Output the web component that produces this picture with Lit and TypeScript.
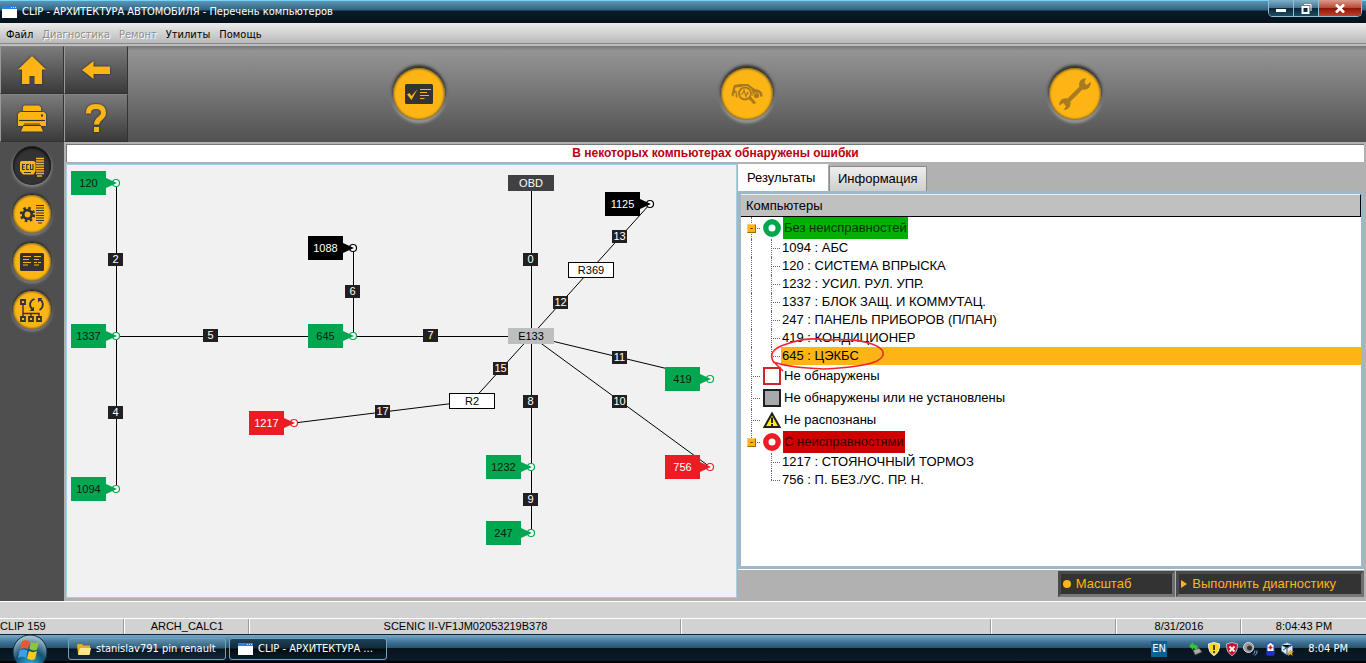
import { LitElement, html, svg, css, nothing } from "lit";
import { customElement, state } from "lit/decorators.js";
import { classMap } from "lit/directives/class-map.js";

type Tone = "ok" | "fault" | "idle";

interface Ecu { id: string; x: number; y: number; tone: Tone }
interface Mark { id: string; x: number; y: number }

const ECUS: Ecu[] = [
  { id: "120", x: 4, y: 6, tone: "ok" },
  { id: "1337", x: 4, y: 159, tone: "ok" },
  { id: "1094", x: 4, y: 312, tone: "ok" },
  { id: "1088", x: 241, y: 71, tone: "idle" },
  { id: "645", x: 241, y: 159, tone: "ok" },
  { id: "1217", x: 182, y: 246, tone: "fault" },
  { id: "1125", x: 538, y: 27, tone: "idle" },
  { id: "419", x: 598, y: 202, tone: "ok" },
  { id: "756", x: 598, y: 290, tone: "fault" },
  { id: "1232", x: 419, y: 290, tone: "ok" },
  { id: "247", x: 419, y: 356, tone: "ok" },
];

const WIRE_MARKS: Mark[] = [
  { id: "2", x: 41, y: 88 },
  { id: "4", x: 41, y: 241 },
  { id: "5", x: 136, y: 164 },
  { id: "6", x: 278, y: 120 },
  { id: "7", x: 356, y: 164 },
  { id: "17", x: 308, y: 240 },
  { id: "0", x: 456, y: 88 },
  { id: "12", x: 486, y: 131 },
  { id: "13", x: 545, y: 65 },
  { id: "15", x: 426, y: 197 },
  { id: "8", x: 456, y: 230 },
  { id: "9", x: 456, y: 328 },
  { id: "11", x: 545, y: 186 },
  { id: "10", x: 545, y: 230 },
];

const JOINTS = [
  { id: "OBD", x: 441, y: 10, kind: "socket" },
  { id: "E133", x: 441, y: 163, kind: "splice" },
  { id: "R369", x: 501, y: 97, kind: "link" },
  { id: "R2", x: 382, y: 228, kind: "link" },
];

const WIRES = [
  [49.5, 18, 49.5, 324], [49, 171.5, 465, 171.5], [286.5, 83, 286.5, 171],
  [464.5, 18, 464.5, 368], [464, 171, 583, 39], [464, 171, 405, 236],
  [405, 236, 227, 258], [464, 171, 643, 214], [464, 171, 643, 302],
];

const GROUPS = [
  {
    icon: "ring-ok", label: "Без неисправностей", tone: "ok",
    items: [
      ["1094", "АБС"], ["120", "СИСТЕМА ВПРЫСКА"], ["1232", "УСИЛ. РУЛ. УПР."],
      ["1337", "БЛОК ЗАЩ. И КОММУТАЦ."], ["247", "ПАНЕЛЬ ПРИБОРОВ (П/ПАН)"],
      ["419", "КОНДИЦИОНЕР"], ["645", "ЦЭКБС"],
    ],
  },
  { icon: "box-red", label: "Не обнаружены", tone: "", items: [] },
  { icon: "box-grey", label: "Не обнаружены или не установлены", tone: "", items: [] },
  { icon: "warning", label: "Не распознаны", tone: "", items: [] },
  {
    icon: "ring-fault", label: "С неисправностями", tone: "fault",
    items: [["1217", "СТОЯНОЧНЫЙ ТОРМОЗ"], ["756", "П. БЕЗ./УС. ПР. Н."]],
  },
];

const treeIcon = (name: string) => {
  switch (name) {
    case "ring-ok":
      return svg`<circle cx="9" cy="9" r="6.2" fill="#fff" stroke="#00a650" stroke-width="5.4"/>`;
    case "ring-fault":
      return svg`<circle cx="9" cy="9" r="6.2" fill="#fff" stroke="#ed1c24" stroke-width="5.4"/>`;
    case "box-red":
      return svg`<rect x="1" y="1" width="16" height="16" fill="#fff" stroke="#d2232a" stroke-width="2"/>`;
    case "box-grey":
      return svg`<rect x="1" y="1" width="16" height="16" fill="#a7a9ac" stroke="#231f20" stroke-width="2"/>`;
    default:
      return svg`<path d="M9 2.5 16.6 16H1.4Z" fill="#fff200" stroke="#231f20" stroke-width="2"/>
        <path d="M9 6.5v5.5M9 13v2" stroke="#231f20" stroke-width="2"/>`;
  }
};

const ICONS = {
  home: svg`<path fill="#fdb515" d="M14 0 28 13.500H24V28H16.500V20H11.500V28H4V13.500H0Z"/>`,
  back: svg`<path fill="#fdb515" d="M0 14 11.500 5V10.500H28V18H11.500V23Z"/>`,
  print: svg`<path fill="#fdb515" d="M6 1.500h15l2 2V7H5V3z M2 8h24l2 2v12h-5l-1.500-2.500h-15L5 22H0V10z"/>
    <path stroke="#333" stroke-width="1.200" d="M1 16.500h26"/><rect x="23" y="10.500" width="2" height="2" fill="#333"/>
    <path fill="#fdb515" d="M6 20.500h16l3 7H3z"/><path stroke="#333" d="M5 21.500h18"/>`,
  help: svg`<path fill="none" stroke="#fdb515" stroke-width="5" d="M6.500 9.500V8.500C6.500 4 9.500 2.500 14 2.500S21.500 4.500 21.500 9C21.500 14.500 14.500 14 14.500 20.500"/>
    <rect x="12" y="23" width="5" height="5" fill="#fdb515"/>`,
  ecu: svg`<path fill="#fdb515" d="M1 7h13l1.500 1.500V17l-2 3.500H3L0 17V8.500z"/>
    <path fill="none" stroke="#333" stroke-width="1.100" d="M5 10.500H2.500v5H5M2.500 13h2M9 10.500H6.700v5H9M10.500 10v5.500h2.500V10M4 18.500h7"/>
    <path stroke="#fdb515" stroke-width="1.300" d="M16 4.500h8M16 7h8M16 9.500h8M16 12h8M16 14.500h8M16 17h8M16 19.500h8M17 22h5"/>`,
  gear: svg`<circle cx="7.500" cy="12.500" r="4.300" fill="none" stroke="#333" stroke-width="2.800"/>
    <circle cx="7.500" cy="12.500" r="6.400" fill="none" stroke="#333" stroke-width="2.600" stroke-dasharray="2.500 2.526"/>
    <path stroke="#333" stroke-width="1.200" d="M16 3.500h8M16 6h8M16 8.500h8M16 11h8M16 13.500h8M16 16h8M16 18.500h8M18 21h4"/>`,
  list: svg`<rect y="3" width="24" height="18" rx="1.500" fill="#333"/>
    <path stroke="#fdb515" stroke-width="1.200" d="M3 6.500h8M3 9.500h6M3 12.500h8M3 15h5M14 6.500h7M14 9.500h5M14 12.500h3M18 12.500h3M14 15h5"/>`,
  network: svg`<g fill="none" stroke="#333"><path stroke-width="1.400" d="M3 7v12M3 15.500h16v3M11 15.500v3"/>
    <path stroke-width="1.800" d="M1 2h4v4H1zM1 19h4v4H1zM9 19h4v4H9zM17 19h4v4h-4z"/>
    <path stroke-width="1.800" d="M12.500 11.500C8.500 8 9.500 2.500 14.500 1M19 1.200C24 3 24 9.500 19.500 12"/></g>
    <path fill="#333" d="M9.500 13H14V8.500zM22.500 0H18v4.500z"/>`,
};

const icon = (name: keyof typeof ICONS, size: number) =>
  html`<svg width=${size} height=${size} viewBox="0 0 ${size} ${size}" aria-hidden="true">${ICONS[name]}</svg>`;

const windowGlyph = html`<svg width="15" height="12" viewBox="0 0 15 12" aria-hidden="true">
  <rect width="15" height="12" fill="#fff"/><rect width="15" height="3" fill="#2d7fe0"/>
  <path stroke="#bfe0ff" d="M9 1.500h1M11 1.500h1M13 1.500h1"/></svg>`;

@customElement("app-root")
export class AppRoot extends LitElement {
  @state() private selected = "645";
  @state() private tab = "results";
  @state() private closed: string[] = [];

  static styles = css`
    :host {
      display: flex;
      flex-direction: column;
      min-height: 100vh;
      background: #b1b1b1;
      color: #000;
      font: 11px/14px "Liberation Sans", Arial, sans-serif;
      overflow: hidden;
    }
    * { box-sizing: border-box; }
    button { font: inherit; color: inherit; border: 0; padding: 0; margin: 0; background: none; cursor: pointer; }
    svg { display: block; flex: none; }

    .titlebar, .menu, .taskbar { font-family: "DejaVu Sans Condensed", "DejaVu Sans", sans-serif; font-stretch: condensed; }
    .titlebar {
      display: flex;
      align-items: center;
      height: 23px;
      padding-left: 2px;
      gap: 5px;
      color: #fff;
      background: linear-gradient(#74d3f2 0 1px, #5b96b8 1px, #30637f 10px, #0a1c29 11px, #06121b);
    }
    .titlebar h1 { margin: 0; flex: 1; font-size: 11px; font-weight: 400; }
    .controls {
      display: flex;
      align-self: flex-start;
      height: 17px;
      margin-right: 4px;
      border: 1px solid #8fc0d8;
      border-top: 0;
      border-radius: 0 0 5px 5px;
      overflow: hidden;
    }
    .controls button {
      display: grid;
      place-items: center;
      width: 25px;
      border-right: 1px solid #8fc0d8;
      background: linear-gradient(#7fb0ca, #3f7390 8px, #0b2334 8px, #1d4c66);
    }
    .controls .close { width: 42px; border: 0; background: linear-gradient(#dc9b8c, #b74632 8px, #8a1405 8px, #c2412a); }

    .menu {
      display: flex;
      align-items: center;
      gap: 9px;
      height: 23px;
      padding: 0 6px;
      background: linear-gradient(#ececec, #b9b9b9 20px, #888 20px 21px, #bcbcbc 21px);
    }
    .menu button:disabled { color: #8e8e8e; text-shadow: 1px 1px #fff; cursor: default; }

    .header { display: flex; height: 96px; background: linear-gradient(#777, #949494 5px, #515151); }
    .tools { display: grid; grid-template-columns: 64px 64px; grid-template-rows: 48px 48px; }
    .tools button {
      display: grid;
      place-items: center;
      border: 1px solid #333;
      border-left-color: #999;
      border-top-color: #858585;
      background: linear-gradient(#7b7b7b, #3a3a3a);
    }
    .tools svg { filter: drop-shadow(0 0 1px #222); }
    .stages { flex: 1; display: flex; justify-content: space-evenly; align-items: center; }
    .stages button { display: grid; place-items: center; width: 74px; height: 74px; }
    .disc {
      display: grid;
      place-items: center;
      width: 52px;
      height: 52px;
      border-radius: 50%;
      background: #fdb515;
      box-shadow: inset 0 0 2px 1px #7c6426, 0 -2px 3px 1px #303030, 0 2px 3px 1px #a0a0a0;
    }

    .body { flex: 1; display: flex; }
    .side { width: 64px; background: #4f4f4f; display: flex; flex-direction: column; align-items: center; }
    .side button { display: grid; place-items: center; width: 64px; height: 48px; }
    .side .disc { width: 38px; height: 38px; box-shadow: inset 0 0 2px 1px #7c6426, 0 -1px 2px 1px #303030, 0 1px 3px 1px #929292; }
    .side .disc.current { background: #333; box-shadow: inset 0 1px 3px #000, 0 -1px 1px #1a1a1a, 0 1px 3px 1px #858585; }
    .work { flex: 1; min-width: 0; display: flex; flex-direction: column; padding: 2px 2px 3px; }
    .message {
      height: 18px;
      margin-bottom: 2px;
      border: solid #777;
      border-width: 1px 0 0 1px;
      background: #fff;
      color: #b90010;
      text-align: center;
      font-size: 12px;
      line-height: 16px;
      font-weight: 700;
    }
    .split { flex: 1; display: grid; grid-template-columns: 671fr 627fr; min-height: 0; }

    .canvas { position: relative; min-height: 430px; border: 1px solid #9fd0e8; background: #f1f1f1; }
    .wires { position: absolute; left: 0; top: 0; overflow: visible; }
    .ecu, .joint, .mark { position: absolute; display: grid; place-items: center; }
    .ecu { width: 35px; height: 24px; }
    .ecu svg { position: absolute; left: 35px; top: 6px; }
    .ok { background: #00a650; color: #0a200f; fill: #00a650; stroke: #00a650; }
    .fault { background: #ed1c24; color: #fff; fill: #ed1c24; stroke: #ed1c24; }
    .idle { background: #000; color: #fff; fill: #000; stroke: #000; }
    .joint { width: 46px; height: 16px; }
    .socket { background: #414042; color: #fff; }
    .splice { background: #bcbec0; }
    .link { background: #fff; border: 1px solid #000; }
    .mark { width: 15px; height: 13px; background: #231f20; color: #fff; line-height: 13px; }

    .panel { display: flex; flex-direction: column; min-width: 0; padding-left: 1px; font-size: 13px; }
    .tabs { display: flex; align-items: flex-end; height: 27px; }
    .tabs button { min-width: 91px; height: 25px; padding: 0 8px; text-align: left; border: 1px solid #8a8a8a; border-bottom: 0; background: linear-gradient(#eee, #cfcfcf); }
    .tabs button[aria-selected="true"] { height: 27px; background: #fff; border-color: #fff #aaa #fff #fff; }
    .sheet { flex: 1; display: flex; flex-direction: column; border: 3px solid #9db8c8; background: #fff; }
    .sheet h2 {
      margin: 0;
      height: 23px;
      padding-left: 5px;
      border: solid;
      border-width: 1px 1px 1px 0;
      border-color: #eee #000 #000;
      background: #c0c0c0;
      font-size: 13px;
      line-height: 22px;
      font-weight: 400;
    }
    .tree, .tree ul { list-style: none; margin: 0; padding: 0; }
    .group { display: flex; align-items: center; height: 22px; }
    .rail { align-self: stretch; width: 22px; flex: none; display: grid; align-items: center; padding-left: 6px; position: relative; }
    .rail::before, .twig::before {
      content: "";
      position: absolute;
      left: 10px; top: 0; bottom: 0;
      border-left: 1px dotted #666;
    }
    .rail::after, .twig::after {
      content: "";
      position: absolute;
      left: 10px; width: 9px; top: 50%;
      border-top: 1px dotted #666;
    }
    .last > .group .rail::before { bottom: 50%; }
    .item .rail::after, .last .item .rail::before { display: none; }
    .twig { position: relative; align-self: stretch; width: 18px; flex: none; }
    .twig::before, .twig::after { left: 8px; }
    .item:last-child .twig::before { bottom: 50%; }
    .toggle {
      position: relative;
      z-index: 1;
      width: 9px;
      height: 9px;
      border: 1px solid #b87400;
      border-color: #f6cf78 #a56900 #a56900 #f6cf78;
      background: #fdb515;
      font-size: 9px;
      line-height: 6px;
    }
    .label { align-self: stretch; margin-left: 2px; padding: 0 1px; line-height: 22px; }
    .label.t-ok { background: #00b000; color: #083008; }
    .label.t-fault { background: #ce0000; color: #3c0000; }
    .item { display: flex; height: 18px; position: relative; }
    .entry { flex: 1; text-align: left; padding-left: 1px; line-height: 18px; white-space: pre; }
    .entry.selected { background: #fdb515; }
    .scribble { position: absolute; left: 28px; top: -12px; z-index: 2; pointer-events: none; }

    .actions { display: flex; justify-content: flex-end; gap: 1px; border-top: 1px solid #fff; padding-top: 1px; height: 29px; }
    .actions button {
      display: flex;
      align-items: center;
      gap: 5px;
      height: 26px;
      padding: 0 25px 0 2px;
      color: #fdb515;
      background: #333;
      border: 3px solid #5c5c5c;
      border-color: #4a4a4a #6e6e6e #777 #4a4a4a;
    }
    .actions button:first-child { padding-right: 41px; }

    .status { background: #d2d2d2; border-top: 1px solid #fff; padding-top: 16px; }
    .cells { display: grid; grid-template-columns: 124px 125px 432fr 310fr 125px 125px 125px; border-top: 1px solid #fff; }
    .cells span { height: 15px; line-height: 14px; text-align: center; border-left: 1px solid #fff; box-shadow: -1px 0 #999; }
    .cells span:first-child { border: 0; text-align: left; box-shadow: none; }

    .taskbar {
      display: flex;
      align-items: center;
      height: 29px;
      gap: 3px;
      color: #fff;
      background: linear-gradient(#0c2333 1px, #78a9c9 1px, #3f7397 8px, #265370 14px, #07141e 14px, #0a1b28 27px, #000 27px);
    }
    .start { width: 65px; padding-left: 12px; align-self: flex-start; }
    .task {
      display: flex;
      align-items: center;
      gap: 5px;
      width: 158px;
      height: 22px;
      padding: 0 8px;
      border: 1px solid #6fa3c0;
      border-radius: 3px;
      background: linear-gradient(#6092af, #2d5c78 9px, #081722 10px, #102838);
      white-space: nowrap;
    }
    .task.active { background: linear-gradient(#1e4258, #102b3b 9px, #030a10 10px, #0b1e2b); }
    .tray { margin-left: auto; display: flex; align-items: center; gap: 4px; padding-right: 18px; }
    .lang { width: 16px; height: 16px; line-height: 16px; text-align: center; background: #0a6090; margin-right: 18px; }
    .tray time { margin-left: 10px; }
  `;

  private toggle(label: string) {
    this.closed = this.closed.includes(label)
      ? this.closed.filter((l) => l !== label)
      : [...this.closed, label];
  }

  private renderHeader() {
    return html`
      <div class="header">
        <nav class="tools" aria-label="Инструменты">
          <button aria-label="Домой">${icon("home", 28)}</button>
          <button aria-label="Назад">${icon("back", 28)}</button>
          <button aria-label="Печать">${icon("print", 28)}</button>
          <button aria-label="Справка">${icon("help", 28)}</button>
        </nav>
        <div class="stages">
          <button aria-label="Проверка"><span class="disc">
            <svg width="28" height="20" viewBox="0 0 28 20"><rect width="28" height="20" rx="1.500" fill="#333"/>
              <path fill="#fdb515" d="M2 10.500 4.500 9 6.500 12 12.500 5 6.500 16z"/>
              <path stroke="#fdb515" stroke-width="1.200" d="M15 5.500h11M15 8.500h7M15 11.500h9M15 14.500h4.500"/></svg>
          </span></button>
          <button aria-label="Диагностика автомобиля"><span class="disc">
            <svg width="32" height="22" viewBox="0 0 32 22"><path fill="#a97b20" d="M.500 12 1.500 7 3 2 9 1h8l6 4.500 5 1.500 3 2.500.800 4H29a3.500 3.500 0 0 0-7-1l-2.500.500L18 5.500 10 4 4.500 4.500 4 7.500 7 9 3 10.500 2.500 14z"/>
              <g fill="none" stroke="#a97b20">
              <circle cx="14" cy="10.500" r="7.500" fill="#fdb515" stroke="none"/>
              <circle cx="14" cy="10.500" r="6" stroke-width="1.800"/>
              <path stroke-width="1.200" d="M9.500 11h2l1.500-4 2 6.500 1.500-4 1 1.500"/>
              <path stroke-width="3" d="m18.500 14.500 5.500 6"/></g>
              <circle cx="25.500" cy="12.500" r="2.600" fill="#a97b20"/><path fill="#a97b20" d="M6 9.500a3 3 0 0 0 .500 5.500z"/></svg>
          </span></button>
          <button aria-label="Ремонт"><span class="disc">
            <svg width="34" height="34" viewBox="0 0 34 34"><path fill="#a97b20" d="M21.500 9.500C20 5 23.500.800 28 1.200L26.500 5.500 28.500 8 32.800 5C33.200 10 29.500 13.500 24.500 12.500L12.500 24.500C13.500 29.500 10 33.200 5.500 32.800L8 29.500 5.500 26 1.200 28.500C.800 24 4.500 20.500 9.500 21.500Z"/></svg>
          </span></button>
        </div>
      </div>`;
  }

  private renderCanvas() {
    const at = (p: Mark) => `left:${p.x}px;top:${p.y}px`;
    return html`
      <section class="canvas" aria-label="Архитектура">
        <svg class="wires" width="668" height="430" stroke="#000" stroke-width="1">
          ${WIRES.map(([a, b, c, d]) => svg`<line x1=${a} y1=${b} x2=${c} y2=${d} />`)}
        </svg>
        ${WIRE_MARKS.map((m) => html`<span class="mark" style=${at(m)}>${m.id}</span>`)}
        ${JOINTS.map((j) => html`<button class="joint ${j.kind}" style=${at(j)}>${j.id}</button>`)}
        ${ECUS.map((e) => html`
          <button class="ecu ${e.tone}" style=${at(e)} @click=${() => (this.selected = e.id)}>
            ${e.id}
            <svg width="15" height="12" viewBox="0 0 15 12" aria-hidden="true">
              <circle cx="10" cy="6" r="3.500" fill="#fff" stroke-width="1.200"/>
              <path stroke="none" d="M0 1 11 6 0 11Z"/>
            </svg>
          </button>`)}
      </section>`;
  }

  private renderTree() {
    return html`
      <ul class="tree">
        ${GROUPS.map((g, i) => html`
          <li class=${classMap({ last: i === GROUPS.length - 1 })}>
            <div class="group">
              <span class="rail">${g.items.length
                ? html`<button class="toggle" aria-label=${g.label} @click=${() => this.toggle(g.label)}>${this.closed.includes(g.label) ? "+" : "-"}</button>`
                : nothing}</span>
              <svg width="18" height="18" viewBox="0 0 18 18" aria-hidden="true">${treeIcon(g.icon)}</svg>
              <span class="label t-${g.tone}">${g.label}</span>
            </div>
            ${g.items.length && !this.closed.includes(g.label)
              ? html`<ul>${g.items.map(([id, name]) => html`
                  <li class="item">
                    <span class="rail"></span><span class="twig"></span>
                    <button class=${classMap({ entry: true, selected: this.selected === id })}
                      @click=${() => (this.selected = id)}>${id} : ${name}</button>
                    ${id === "645" ? html`
                      <svg class="scribble" width="118" height="42" viewBox="0 0 118 42" fill="none" stroke="#f0262a" stroke-width="1.600" aria-hidden="true">
                        <path d="M14 36 4 26C1 20 3 15 12 11 28 5 40 2 58 5 78 4 95 6 103 9 117 14 117 21 108 26 97 31 76 33 55 34 34 33 19 32 4 27"/>
                      </svg>` : nothing}
                  </li>`)}</ul>`
              : nothing}
          </li>`)}
      </ul>`;
  }

  private renderTaskbar() {
    return html`
      <footer class="taskbar">
        <button class="start" aria-label="Пуск">
          <svg width="36" height="29" viewBox="0 0 36 29">
            <defs><radialGradient id="orb" cx=".5" cy=".9" r=".9"><stop offset="0" stop-color="#2bb6e8"/><stop offset=".5" stop-color="#14506f"/><stop offset="1" stop-color="#b8cfdb"/></radialGradient></defs>
            <circle cx="18" cy="18" r="17" fill="url(#orb)" stroke="#0b2a3c"/>
            <path fill="#f0562a" d="M10 7.500c3-2 5-1.500 7.500 0L16 15c-3-1.500-5-1.500-8 0z"/>
            <path fill="#8cc63e" d="M19 8c3 1.500 5 1.500 8-.500L25 15.500c-3 1.500-5 1-7.500-.500z"/>
            <path fill="#3d9fe8" d="M7.500 16.500c3-1.500 5-1.500 8 0L14 24c-3-2-5-1.500-8 0z"/>
            <path fill="#fcc91c" d="M17 17c3 1.500 5 1.500 8 0L23 25c-3 1.500-5 1-8-.500z"/>
          </svg>
        </button>
        <button class="task">
          <svg width="14" height="12" viewBox="0 0 14 12"><path fill="#e3ae2d" d="M0 2 1 1h4l1.500 1.500H13V11H1z"/><path fill="#ffe68f" d="M3 5h11l-1.500 7H1z"/></svg>
          stanislav791 pin renault
        </button>
        <button class="task active">${windowGlyph} CLIP - АРХИТЕКТУРА ...</button>
        <div class="tray">
          <span class="lang">EN</span>
          <svg width="14" height="14" viewBox="0 0 14 14"><path fill="#aaa" stroke="#444" d="m4 8 6-2 3 4-7 3z"/><path fill="#35c435" d="M0 4 4 0v2l5 2-1 4-4-2v2z"/></svg>
          <svg width="14" height="14" viewBox="0 0 14 14"><path fill="#f9d71c" stroke="#eee" d="M1.500 2 7 .500 12.500 2C12.500 8 11 11.500 7 13.500 3 11.500 1.500 8 1.500 2z"/><path stroke="#222" stroke-width="1.600" d="M7 3v5M7 9v2"/></svg>
          <svg width="14" height="14" viewBox="0 0 14 14"><path fill="#c8102a" stroke="#bbb" d="M1.500 2 7 .500 12.500 2C12.500 8 11 11.500 7 13.500 3 11.500 1.500 8 1.500 2z"/><path stroke="#fff" stroke-width="1.800" d="m4.500 4.500 5 5m0-5-5 5"/></svg>
          <svg width="15" height="14" viewBox="0 0 15 14"><circle cx="5.500" cy="5.500" r="5" fill="#999" stroke="#ddd"/><circle cx="6.500" cy="6" r="2.500" fill="#333"/><path fill="none" stroke="#7fa6e8" d="M10 12.500q2-1 2-4M12 13.500q2.500-2 2-5"/></svg>
          <svg width="14" height="14" viewBox="0 0 14 14"><path fill="#fff" stroke="#3348c8" d="M5 2h2V.500h3V2h2v11H5z"/><path fill="#1a33cc" d="M5 9h7v4H5z"/><path stroke="#e01818" stroke-width="1.500" d="M8.500 3.500v4M6.500 5.500h4"/></svg>
          <svg width="14" height="14" viewBox="0 0 14 14"><path fill="#dceaf4" stroke="#5f89a8" d="M1.500 3 7 .500 12.500 3v6L7 13 1.500 9z"/><path stroke="#315d7d" d="m1.500 3 5.500 3 5.500-3M7 6v7M3 8l8-5"/><path fill="#f5a623" d="m10.500 7 1 2.500H14l-2 1.500.700 3-2.200-1.700L8 14l1-3-2-1.500h2.500z"/></svg>
          <time>8:04 PM</time>
        </div>
      </footer>`;
  }

  render() {
    return html`
      <header class="titlebar">
        ${windowGlyph}
        <h1>CLIP - АРХИТЕКТУРА АВТОМОБИЛЯ - Перечень компьютеров</h1>
        <div class="controls">
          <button aria-label="Свернуть"><svg width="10" height="9"><path fill="#fff" d="M0 5h10v3H0z"/></svg></button>
          <button aria-label="Восстановить"><svg width="11" height="11" fill="none" stroke="#fff"><path stroke-width="2" d="M1.500 4h6v6h-6z"/><path d="M3 1.500h7V8"/></svg></button>
          <button class="close" aria-label="Закрыть"><svg width="10" height="9"><path stroke="#fff" stroke-width="2.600" d="m1 .500 8 8m0-8-8 8"/></svg></button>
        </div>
      </header>
      <nav class="menu" aria-label="Меню">
        <button>Файл</button><button disabled>Диагностика</button><button disabled>Ремонт</button>
        <button>Утилиты</button><button>Помощь</button>
      </nav>
      ${this.renderHeader()}
      <main class="body">
        <nav class="side" aria-label="Режимы">
          <button aria-label="Компьютеры"><span class="disc current">${icon("ecu", 24)}</span></button>
          <button aria-label="Параметры"><span class="disc">${icon("gear", 24)}</span></button>
          <button aria-label="Список"><span class="disc">${icon("list", 24)}</span></button>
          <button aria-label="Обновить сеть"><span class="disc">${icon("network", 24)}</span></button>
        </nav>
        <div class="work">
          <div class="message" role="status">В некоторых компьютерах обнаружены ошибки</div>
          <div class="split">
            ${this.renderCanvas()}
            <section class="panel">
              <div class="tabs" role="tablist">
                <button role="tab" aria-selected=${this.tab === "results"} @click=${() => (this.tab = "results")}>Результаты</button>
                <button role="tab" aria-selected=${this.tab === "info"} @click=${() => (this.tab = "info")}>Информация</button>
              </div>
              <div class="sheet" role="tabpanel">
                ${this.tab === "results" ? html`<h2>Компьютеры</h2>${this.renderTree()}` : nothing}
              </div>
              <div class="actions">
                <button><svg width="8" height="8"><circle cx="4" cy="4" r="4" fill="#fdb515"/></svg>Масштаб</button>
                <button><svg width="6" height="8"><path d="M0 0 6 4 0 8z" fill="#fdb515"/></svg>Выполнить диагностику</button>
              </div>
            </section>
          </div>
        </div>
      </main>
      <div class="status">
        <div class="cells">
          <span>CLIP 159</span><span>ARCH_CALC1</span><span>SCENIC II-VF1JM02053219B378</span>
          <span></span><span></span><span>8/31/2016</span><span>8:04:43 PM</span>
        </div>
      </div>
      ${this.renderTaskbar()}
    `;
  }
}
